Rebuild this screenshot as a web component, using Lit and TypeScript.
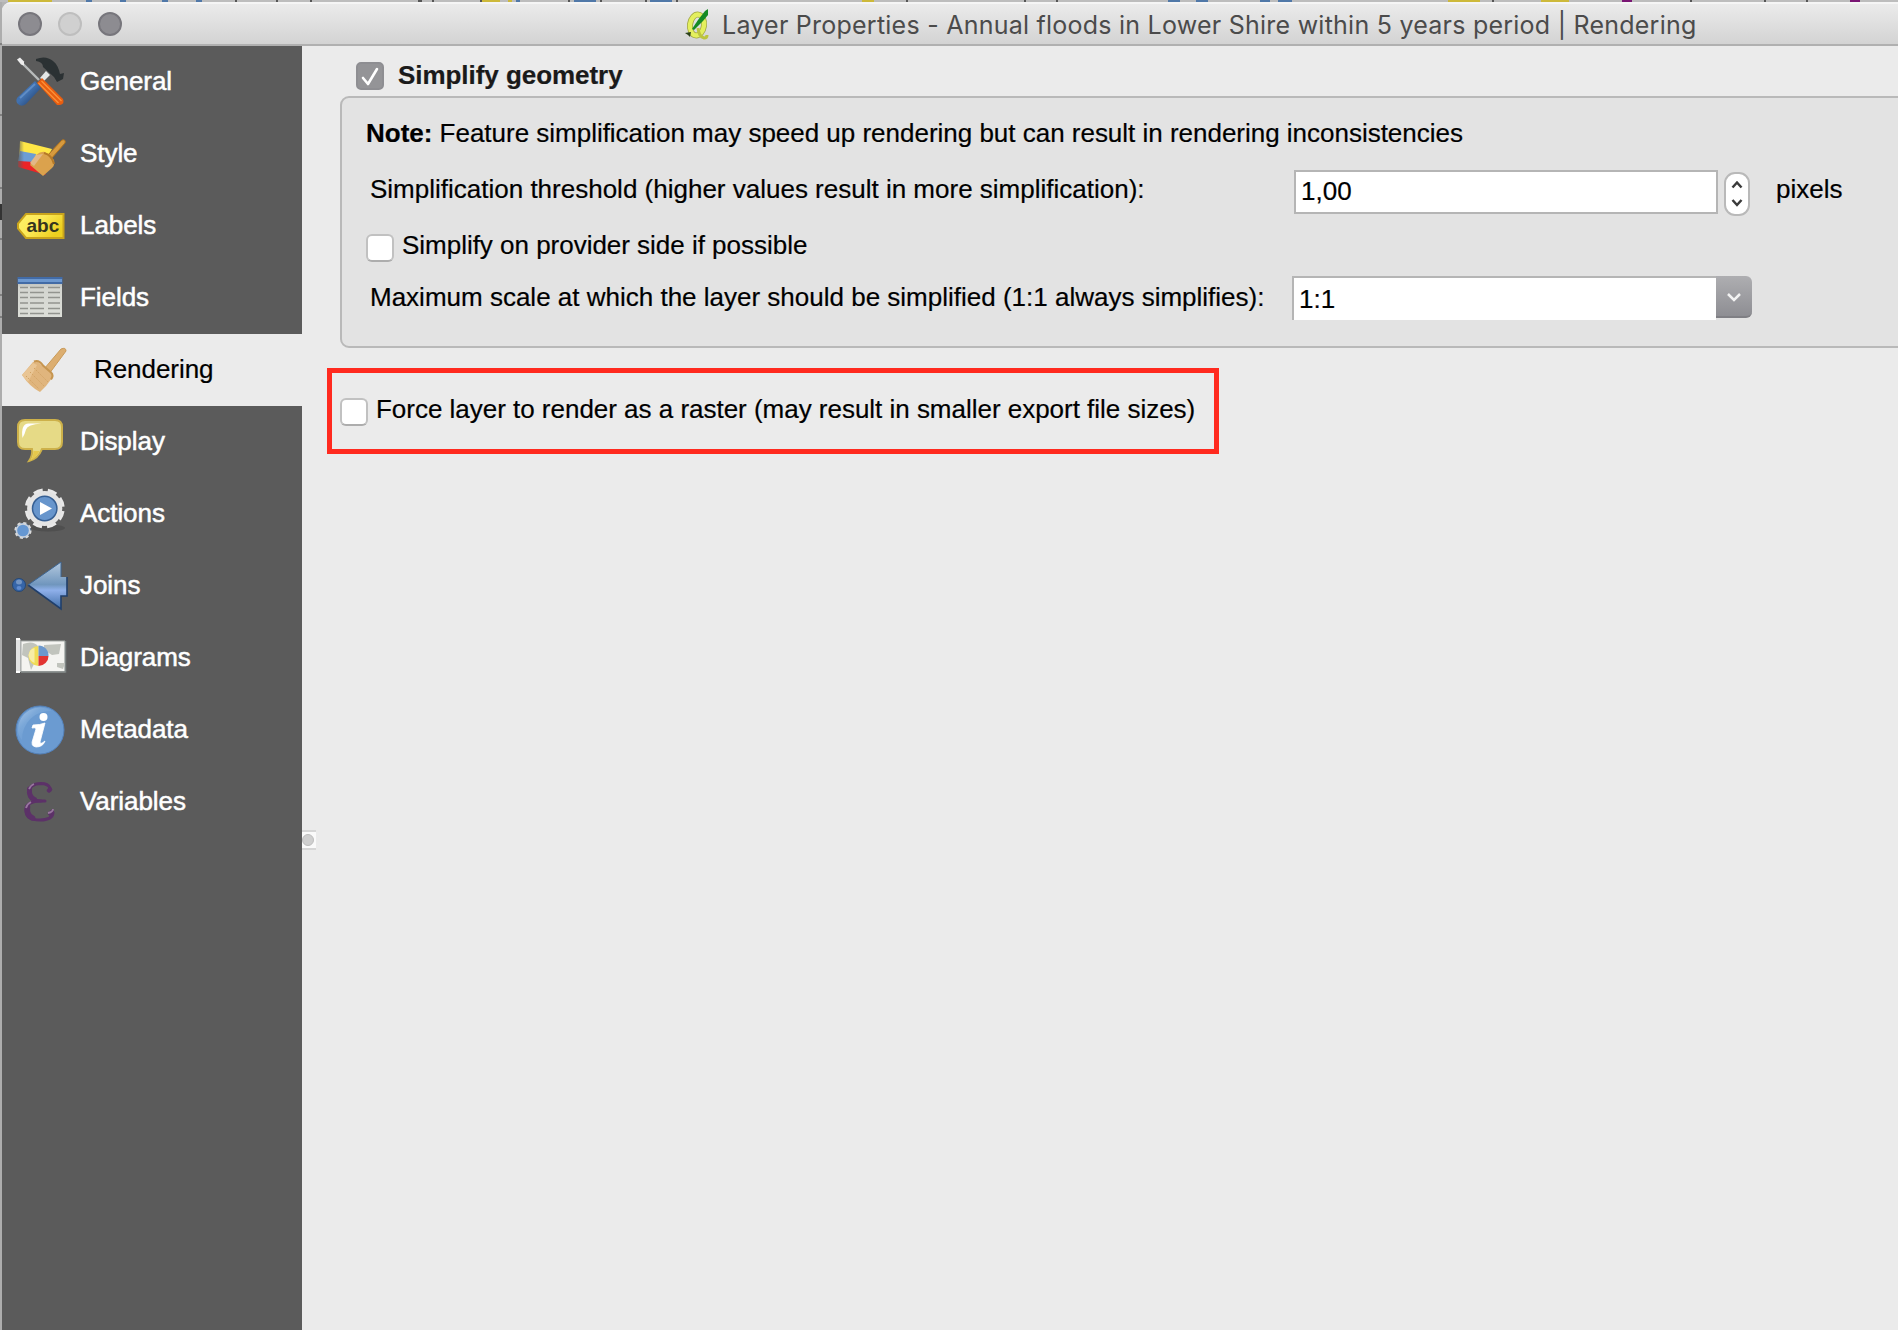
import { LitElement, html, css, svg } from "lit";
import { customElement, property } from "lit/decorators.js";
import { classMap } from "lit/directives/class-map.js";

const icons: Record<string, unknown> = {
  general: svg`
    <defs>
      <linearGradient id="blue" x1="0" y1="0" x2="1" y2="1"><stop offset="0" stop-color="#2f5f9e"/><stop offset=".45" stop-color="#4272b0"/><stop offset="1" stop-color="#17315c"/></linearGradient>
    </defs>
    <path d="M5 6l18 18" stroke="#b9bcbc" stroke-width="2.400"/>
    <path d="M1 3.500l3-2 4 4v4l-3-1z" fill="#ededed"/>
    <path d="M24 22l6-7 4 4-6 6z" fill="#e4e6e6"/>
    <path d="M20 3q10-4 17 2c4 3 6 8 7 13l4-1-1 6-6 3-3-5-11-10Q27 6 20 5z" fill="#2b3133"/>
    <path d="M19 25L3 40q-4 3-2 7 4 5 9 1L25 32z" fill="url(#blue)"/>
    <path d="M19 28L4 42" stroke="#5f8dc6" stroke-width="1.800"/>
    <path d="M21 27l5-5L47 43q2 5-3 6h-3z" fill="#e85d10"/>
    <path d="M25.500 25l20 20M22.500 27l20 20" stroke="#fb9238" stroke-width="1.300"/>`,
  style: svg`
    <defs><linearGradient id="fade"><stop offset="0" stop-color="#5b5b5b" stop-opacity="1"/><stop offset="1" stop-color="#5b5b5b" stop-opacity="0"/></linearGradient></defs>
    <g transform="translate(0 2)">
    <path d="M4 11l32 8-5 10H3z" fill="#ffe746"/><path d="M4 21l16 3-2 10L2 31z" fill="#6d9dd4"/><path d="M2 31l17 1 11 13L2 37z" fill="#ec2427"/>
    <rect x="0" y="8" width="8" height="32" fill="url(#fade)"/>
    <path d="M31 26l15-16q4-1 3 3L35 29z" fill="#d79a3e" stroke="#b3741c"/>
    <path d="M20 25q5-4 9-3l9 8q1 5-2 8l-9 8-13-11z" fill="#dba24d"/>
    <path d="M20 25l7-1-9 12-4-3z" fill="#e3b787"/><path d="M28 23q8 2 10 11" fill="none" stroke="#b67a27" stroke-width="2"/>
    </g>`,
  labels: svg`
    <defs><linearGradient id="tag" x1="0" y1="0" x2="1" y2=".5"><stop offset="0" stop-color="#fff06a"/><stop offset=".5" stop-color="#fbe956"/><stop offset="1" stop-color="#edcf1f"/></linearGradient></defs>
    <path d="M10 14H47.500V38H10L2 28.500v-5z" fill="url(#tag)" stroke="#c9a41c" stroke-width="2"/>
    <text x="10.500" y="32" class="abc">abc</text>`,
  fields: svg`
    <defs><linearGradient id="sheet" x1="0" y1="0" x2="0" y2="1"><stop offset="0" stop-color="#a9aba8"/><stop offset=".25" stop-color="#d3d5d0"/><stop offset="1" stop-color="#dcded8"/></linearGradient></defs>
    <rect x="2" y="6" width="44" height="39" fill="url(#sheet)"/>
    <rect x="1.500" y="5" width="45" height="7" fill="#426ba6"/><rect x="2" y="7" width="44" height="3" fill="#6c98d0"/>
    <path d="M4 15.500h8m2 0h14m4 0h12M4 20.500h8m2 0h14m4 0h12M4 25.500h8m2 0h14m4 0h12M4 31h8m2 0h14m4 0h12M4 36.500h8m2 0h14m4 0h12M4 41.500h8m2 0h14m4 0h12" stroke="#92948f" stroke-width="1.600"/>`,
  rendering: svg`
    <path d="M28 25L45 5q5-2 5 2L33 30z" fill="#dcae70" stroke="#c99a58"/>
    <path d="M6 31L17 18l4-1 15 13v4l-6 8-6 6q-10-5-18-17z" fill="#e0b57d"/>
    <path d="M6 31l11-12 4 2-9 17z" fill="#e9c594"/><path d="M18 17.500q5-2 9 4l8 7q3 3 0 7" fill="none" stroke="#c6954f" stroke-width="2"/>
    <path d="M10 32l13 13M14 28l14 14M18 24l14 14" stroke="#d1a263" stroke-dasharray="1.500 1.500"/>`,
  display: svg`
    <g transform="translate(0 1)">
    <path d="M9 3h30q7 0 7 7v15q0 7-7 7H26Q22 42 13 44q4-6 3-12H9q-7 0-7-7V10q0-7 7-7z" fill="#e6da86" stroke="#cdb14a" stroke-width="2"/>
    <path d="M6.500 21q-2-14 6-14.500h13q-14 1-15.500 6-1 4-3.500 8.500z" fill="#fff"/>
    <path d="M17.500 34h6Q20 41 14 43.500q3.500-4 3.500-9.500z" fill="#e6c84c"/>
    </g>`,
  actions: svg`
    <ellipse cx="32" cy="40" rx="17" ry="3.500" fill="#484848" opacity=".6"/>
    <circle cx="28.700" cy="20.500" r="17.700" fill="none" stroke="#e8e8e8" stroke-width="4.600" stroke-dasharray="8.900 5.002" transform="rotate(8 28.700 20.500)"/>
    <circle cx="28.700" cy="20.500" r="17.600" fill="#e4e4e4"/><circle cx="28.700" cy="20.500" r="12.200" fill="#6795cc" stroke="#365f93" stroke-width="1.500"/>
    <path d="M24 14v13l12-6.500z" fill="#fff"/>
    <circle cx="7" cy="42.500" r="7.600" fill="#6d9bd3" stroke="#dbdbdb" stroke-width="2" stroke-dasharray="3.200 2.770"/><circle cx="7" cy="42.500" r="6.500" fill="#6597d2" stroke="#ccd2da" stroke-width="1.300"/>`,
  joins: svg`
    <defs><linearGradient id="arrow" x1="0" y1="0" x2="0" y2="1"><stop offset="0" stop-color="#b5cae0"/><stop offset=".48" stop-color="#7096bd"/><stop offset=".6" stop-color="#8fb0ea"/><stop offset="1" stop-color="#3f6da8"/></linearGradient></defs>
    <path d="M12 25L45 2v15h6v19h-6v13z" fill="url(#arrow)"/>
    <path d="M12 25l33 24V36h6V17" fill="none" stroke="#203f6b" stroke-width="1.600"/><path d="M12 25L45 2v15" fill="none" stroke="#3e6693"/>
    <circle cx="3" cy="25" r="6.500" fill="#3665a8" stroke="#264875"/><ellipse cx="3" cy="22" rx="3" ry="2.500" fill="#7395c4"/><ellipse cx="3" cy="28" rx="2.500" ry="2" fill="#5f8bd0"/>`,
  diagrams: svg`
    <path d="M5 9h44v31H5z" fill="#f4f4f1" stroke="#a5aaa7"/><path d="M49.500 9v31H5" fill="none" stroke="#7d8483" stroke-width="1.500"/>
    <path d="M7 12q10-4 15 2l-6 8 3 8-4 8-3-12-6-3zM28 13l17-1-2 10-7 1-8-5zM41 31l8 0-2 6-6-2z" fill="#c1c4bd"/>
    <rect x="0" y="7" width="4.500" height="33" fill="#e2e3e3"/><path d="M0 7h4M0 40h4" stroke="#fff" stroke-width="2"/>
    <path d="M22.500 14v20a10 10 0 0 1 0-20z" fill="#f0dc55"/><path d="M22.500 24V13.500A10 10 0 0 1 32.500 24z" fill="#6c98cd"/><path d="M22.500 24H32.500A10 10 0 0 1 22.500 34z" fill="#e23532"/>
    <path d="M12.500 23q1-6 6-7v15q-5-2-6-8z" fill="#f7eda6"/>`,
  metadata: svg`
    <defs><linearGradient id="gloss" x1="0" y1="0" x2=".7" y2=".7"><stop offset="0" stop-color="#a9c7e8"/><stop offset=".5" stop-color="#7aa7d8"/><stop offset="1" stop-color="#6b9bd1"/></linearGradient></defs>
    <g transform="translate(0 1)">
    <circle cx="24" cy="25" r="24" fill="#6b9bd1" stroke="#5482bb"/>
    <path d="M2 25A22 22 0 0 1 36 6 28 28 0 0 0 6 35Q2 30 2 25z" fill="url(#gloss)"/>
    <circle cx="27.500" cy="12" r="4" fill="#fff"/>
    <path d="M17 20q7 0 12-2l-5 19q0 3 5-1-2 6-9 6-6-1-3-8l3-10q0-2-4-1z" fill="#fff" stroke="#fff" stroke-width=".8"/>
    </g>`,
  variables: svg`
    <g fill="none" stroke="#5c3168" stroke-linecap="round">
      <path d="M34 12Q32 7.500 25 7.500 13 8 13 16q0 9 12 9h4" stroke-width="3"/>
      <path d="M13.500 13q-1 8 5 10.500" stroke-width="5"/>
      <path d="M25 25Q10 25 10 34.500 10 44 24 44q12 0 13-7" stroke-width="3"/>
      <path d="M11.500 31q-1.500 8 5 11" stroke-width="5.500"/>
      <path d="M34 13.500l-1 1M36 36l-2 1.500" stroke-width="4.500"/>
    </g>
    <path d="M13 13q2-4 5-5M10 32q1-4 5-6M32 37q5-1 5-4" fill="none" stroke="#98769f" stroke-width="1.800"/>`,
};

const pages = [
  ["general", "General"], ["style", "Style"], ["labels", "Labels"], ["fields", "Fields"],
  ["rendering", "Rendering"], ["display", "Display"], ["actions", "Actions"], ["joins", "Joins"],
  ["diagrams", "Diagrams"], ["metadata", "Metadata"], ["variables", "Variables"],
];

@customElement("nav-item")
class NavItem extends LitElement {
  @property() icon = "";
  @property() label = "";
  @property({ type: Boolean }) selected = false;
  static styles = css`
    :host { display: block; height: 72px; }
    .row { display: flex; align-items: center; height: 72px; box-sizing: border-box; padding-left: 14px; gap: 12px; color: #fff; -webkit-text-stroke: .5px #fff; }
    .row.selected { background: #ebebeb; color: #000; gap: 26px; -webkit-text-stroke: .2px #000; }
    .icon { width: 52px; height: 52px; flex: none; overflow: visible; }
    .label { font-size: 26px; line-height: 30px; letter-spacing: -.06px; padding-bottom: 3px; }
    .abc { font: bold 19px "Liberation Sans", sans-serif; fill: #35351e; -webkit-text-stroke: 0; }
  `;
  render() {
    return html`<div class=${classMap({ row: true, selected: this.selected })}>
      <svg class="icon" viewBox="0 0 52 52">${icons[this.icon]}</svg>
      <span class="label">${this.label}</span>
    </div>`;
  }
}

@customElement("check-box")
class CheckBox extends LitElement {
  @property({ type: Boolean }) checked = false;
  static styles = css`
    :host { display: block; flex: none; width: 28px; height: 28px; }
    .box { box-sizing: border-box; width: 28px; height: 28px; border: 2px solid #c1c1c1; border-bottom-color: #adadad; border-radius: 6px; background: #fff; }
    .box.checked { background: #949497; border-color: #8e8e92; border-radius: 5px; }
    svg { display: block; width: 24px; height: 24px; }
  `;
  render() {
    return html`<div class=${classMap({ box: true, checked: this.checked })}>
      ${this.checked ? html`<svg viewBox="0 0 24 24"><path d="M5 14l5 6L19 5" fill="none" stroke="#fff" stroke-width="2.600" stroke-linecap="round" stroke-linejoin="round"/></svg>` : ""}
    </div>`;
  }
}

@customElement("app-root")
class AppRoot extends LitElement {
  static styles = css`
    :host { display: block; width: 1898px; height: 1330px; overflow: hidden; font: 26px/30px "Liberation Sans", Arial, sans-serif; color: #000; background: #b4b4b4; }
    .screen { display: grid; grid-template-columns: 2px 1fr; grid-template-rows: 2px 1fr; height: 1330px; }
    .behind-top { grid-column: 1 / 3; width: 1898px; height: 2px; display: block; }
    .behind-left { width: 2px; height: 1328px; display: block; }
    .window { display: flex; flex-direction: column; border-top-left-radius: 9px; overflow: hidden; background: #ebebeb; }
    .titlebar { display: flex; align-items: center; height: 44px; box-sizing: border-box; border-top: 2px solid #f5f5f5; border-bottom: 2px solid #b0b0b0; background: linear-gradient(#ebebeb, #d3d3d3); }
    .lights { display: flex; gap: 16px; padding-left: 16px; width: 666px; }
    .light { box-sizing: border-box; width: 24px; height: 24px; border-radius: 50%; background: #8d8c91; border: 2px solid #77767c; }
    .light.off { background: #d0d0d0; border-color: #bebebe; }
    .logo { width: 26px; height: 32px; flex: none; }
    .title { font-family: Inter, "Liberation Sans", sans-serif; font-size: 25px; letter-spacing: .24px; color: #4b4b4b; white-space: nowrap; margin-left: 12px; padding-top: 2px; }
    .body { display: grid; grid-template-columns: 300px 1fr; flex: 1; }
    .sidebar { background: #5b5b5b; }
    .main { position: relative; padding: 15px 0 0 25px; -webkit-text-stroke: .2px currentColor; }
    .handle { position: absolute; left: 0; top: 784px; width: 14px; height: 20px; box-sizing: border-box; border-top: 2px solid #d6d6d6; border-bottom: 2px solid #d6d6d6; background: #fafafa; }
    .dot { width: 12px; height: 12px; margin: 2px 0 0 0; border-radius: 50%; background: #cfcfcf; border: 1px solid #bdbdbd; box-sizing: border-box; }
    .head { display: flex; align-items: center; gap: 14px; height: 30px; padding-left: 29px; color: #1a1a1a; font-weight: bold; letter-spacing: -.05px; }
    .head span { padding-bottom: 2px; }
    .group { box-sizing: border-box; height: 252px; margin: 5px -12px 0 13px; border: 2px solid #b9b9b9; border-radius: 9px; background: #e3e3e3; padding: 20px 0 0 24px; }
    .line { display: flex; white-space: nowrap; height: 30px; }
    .note { letter-spacing: -.015px; }
    .field { display: grid; grid-template-columns: 924px 1fr; height: 44px; margin-left: 4px; }
    .controls { display: flex; }
    .threshold { margin-top: 22px; }
    .threshold .label { padding-top: 4px; }
    .label { white-space: nowrap; }
    .input { box-sizing: border-box; width: 424px; height: 44px; border: 2px solid #b5b5b5; background: #fff; padding: 2px 5px; line-height: 34px; }
    .stepper { width: 26px; height: 44px; margin: 2px 0 0 6px; }
    .unit { padding: 4px 0 0 26px; }
    .option { gap: 8px; height: 30px; margin-top: 16px; letter-spacing: -.02px; }
    .option check-box { margin-top: 4px; }
    .scale { margin-top: 16px; }
    .scale .label { padding-top: 6px; }
    .combo { display: flex; width: 460px; height: 44px; margin-left: -2px; }
    .value { box-sizing: border-box; width: 424px; height: 44px; border-top: 2px solid #b5b5b5; border-left: 2px solid #b5b5b5; background: #fff; padding: 6px 5px 0; }
    .drop { box-sizing: border-box; width: 36px; height: 42px; border-radius: 0 6px 6px 0; background: linear-gradient(#aeaeb1, #8e8e93); border-bottom: 2px solid #7f7f84; }
    .force { box-sizing: border-box; width: 892px; height: 86px; margin: 20px 0 0 0; border: 5px solid #ff2a1f; display: flex; gap: 8px; padding: 21px 0 0 8px; white-space: nowrap; letter-spacing: -.02px; }
    .force check-box { margin-top: 4px; }
  `;
  render() {
    return html`<div class="screen">
      <svg class="behind-top" viewBox="0 0 1898 2" preserveAspectRatio="none">
        <rect width="1898" height="2" fill="#bdbdbd"/>
        <path d="M8 1h44M482 1h18M508 1h4M862 1h12M1448 1h32M1541 1h28" stroke="#cdb93a" stroke-width="2"/>
        <path d="M86 1h6M120 1h6M162 1h6M196 1h6M516 1h4M574 1h22M650 1h22M1168 1h12M1196 1h12M1260 1h10M1278 1h14" stroke="#5078a8" stroke-width="2"/>
        <path d="M235 1h2M276 1h2M310 1h2M418 1h4M432 1h2M480 1h2M568 1h2M600 1h2M645 1h2M676 1h2M906 1h2M1024 1h2M1056 1h2M1492 1h2M1690 1h2M1764 1h2M1806 1h2" stroke="#555" stroke-width="2"/>
        <path d="M1850 1h10M1622 1h10" stroke="#7a1674" stroke-width="2"/>
      </svg>
      <svg class="behind-left" viewBox="0 0 2 1328"><rect width="2" height="1328" fill="#adadad"/><path d="M1 202v16" stroke="#333" stroke-width="2"/><path d="M0 42h2M0 113h2M0 186h2M0 237h2M0 293h2M0 315h2" stroke="#808080" stroke-width="2"/></svg>
      <div class="window">
        <header class="titlebar">
          <div class="lights"><span class="light"></span><span class="light off"></span><span class="light"></span></div>
          <svg class="logo" viewBox="0 0 26 32">
            <ellipse cx="13" cy="17" rx="7" ry="10.500" fill="none" stroke="#a3a944" stroke-width="6" transform="rotate(8 13 17)"/>
            <ellipse cx="13" cy="17" rx="7" ry="10.500" fill="none" stroke="#e4ef5e" stroke-width="4.400" transform="rotate(8 13 17)"/>
            <path d="M14 20q1 9 6 10 3 0 3-3" fill="none" stroke="#bcc43f" stroke-width="3"/>
            <path d="M8 21L14 12 21 3l3-2v6l-5 6-9 9z" fill="#158a24"/><path d="M1 25l6-1-1 5-2-2z" fill="#2b4019"/>
          </svg>
          <span class="title">Layer Properties - Annual floods in Lower Shire within 5 years period | Rendering</span>
        </header>
        <div class="body">
          <nav class="sidebar">${pages.map(([icon, label]) => html`<nav-item .icon=${icon} .label=${label} .selected=${icon === "rendering"}></nav-item>`)}</nav>
          <main class="main">
            <div class="handle"><div class="dot"></div></div>
            <div class="head"><check-box .checked=${true}></check-box><span>Simplify geometry</span></div>
            <section class="group">
              <div class="line note"><span class="label"><b>Note:</b> Feature simplification may speed up rendering but can result in rendering inconsistencies</span></div>
              <div class="field threshold">
                <span class="label">Simplification threshold (higher values result in more simplification):</span>
                <div class="controls">
                  <div class="input">1,00</div>
                  <svg class="stepper" viewBox="0 0 26 44"><rect x="1" y="1" width="24" height="42" rx="10" fill="#fff" stroke="#b9b9b9" stroke-width="2"/><path d="M8.500 15.500l4.500-5 4.500 5M8.500 28l4.500 5 4.500-5" fill="none" stroke="#3b3b3b" stroke-width="2.500"/></svg>
                  <span class="unit">pixels</span>
                </div>
              </div>
              <div class="line option"><check-box></check-box><span class="label">Simplify on provider side if possible</span></div>
              <div class="field scale">
                <span class="label">Maximum scale at which the layer should be simplified (1:1 always simplifies):</span>
                <div class="combo"><div class="value">1:1</div><svg class="drop" viewBox="0 0 36 40"><path d="M12 18l6 6 6-6" fill="none" stroke="#f2f2f2" stroke-width="2.500"/></svg></div>
              </div>
            </section>
            <div class="force"><check-box></check-box><span>Force layer to render as a raster (may result in smaller export file sizes)</span></div>
          </main>
        </div>
      </div>
    </div>`;
  }
}
